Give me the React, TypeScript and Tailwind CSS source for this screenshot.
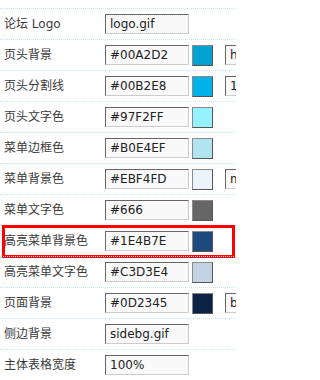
type Row = {
  label: string;
  value: string;
  swatch?: string;
  extra?: string;
};

const rows: Row[] = [
  { label: "论坛 Logo", value: "logo.gif" },
  { label: "页头背景", value: "#00A2D2", swatch: "#00A2D2", extra: "hdbg.gif" },
  { label: "页头分割线", value: "#00B2E8", swatch: "#00B2E8", extra: "1px" },
  { label: "页头文字色", value: "#97F2FF", swatch: "#97F2FF" },
  { label: "菜单边框色", value: "#B0E4EF", swatch: "#B0E4EF" },
  { label: "菜单背景色", value: "#EBF4FD", swatch: "#EBF4FD", extra: "mnbg.gif" },
  { label: "菜单文字色", value: "#666", swatch: "#666666" },
  { label: "高亮菜单背景色", value: "#1E4B7E", swatch: "#1E4B7E" },
  { label: "高亮菜单文字色", value: "#C3D3E4", swatch: "#C3D3E4" },
  { label: "页面背景", value: "#0D2345", swatch: "#0D2345", extra: "bg.gif" },
  { label: "侧边背景", value: "sidebg.gif" },
  { label: "主体表格宽度", value: "100%" },
];

const font = "font-['DejaVu_Sans','Noto_Sans_CJK_SC',sans-serif]";

function Field({ value, className = "" }: { value: string; className?: string }) {
  return (
    <div
      className={`h-[20px] shrink-0 border border-t-[#666] border-l-[#666] border-r-[#ccc] border-b-[#ccc] bg-[#f9f9f9] pl-[4px] text-[12px] leading-[18px] text-[#222] whitespace-nowrap overflow-hidden ${className}`}
    >
      {value}
    </div>
  );
}

export default function App() {
  return (
    <div className={`w-[236px] h-[380px] overflow-hidden bg-white pt-[8px] ${font}`}>
      {rows.map((row, i) => (
        <div
          key={row.label}
          className="relative h-[31px] border-t border-dotted border-[#c6e3f5] flex items-start pt-[5px]"
        >
          {i === 7 && (
            <div className="absolute left-[2px] top-[-1px] w-[233px] h-[33px] border-[3px] border-[#ff0000]" />
          )}
          <div className="relative w-[105px] shrink-0 pl-[4px] text-[12px] leading-[20px] text-[#3a3a3a] whitespace-nowrap">
            {row.label}
          </div>
          <Field value={row.value} className="relative w-[84px]" />
          {row.swatch && (
            <div
              className="relative ml-[3px] w-[21px] h-[21px] shrink-0 border border-t-[#8a8a8a] border-l-[#8a8a8a] border-r-[#555] border-b-[#555]"
              style={{ backgroundColor: row.swatch }}
            />
          )}
          {row.extra && <Field value={row.extra} className="relative ml-[12px] w-[60px]" />}
        </div>
      ))}
    </div>
  );
}
